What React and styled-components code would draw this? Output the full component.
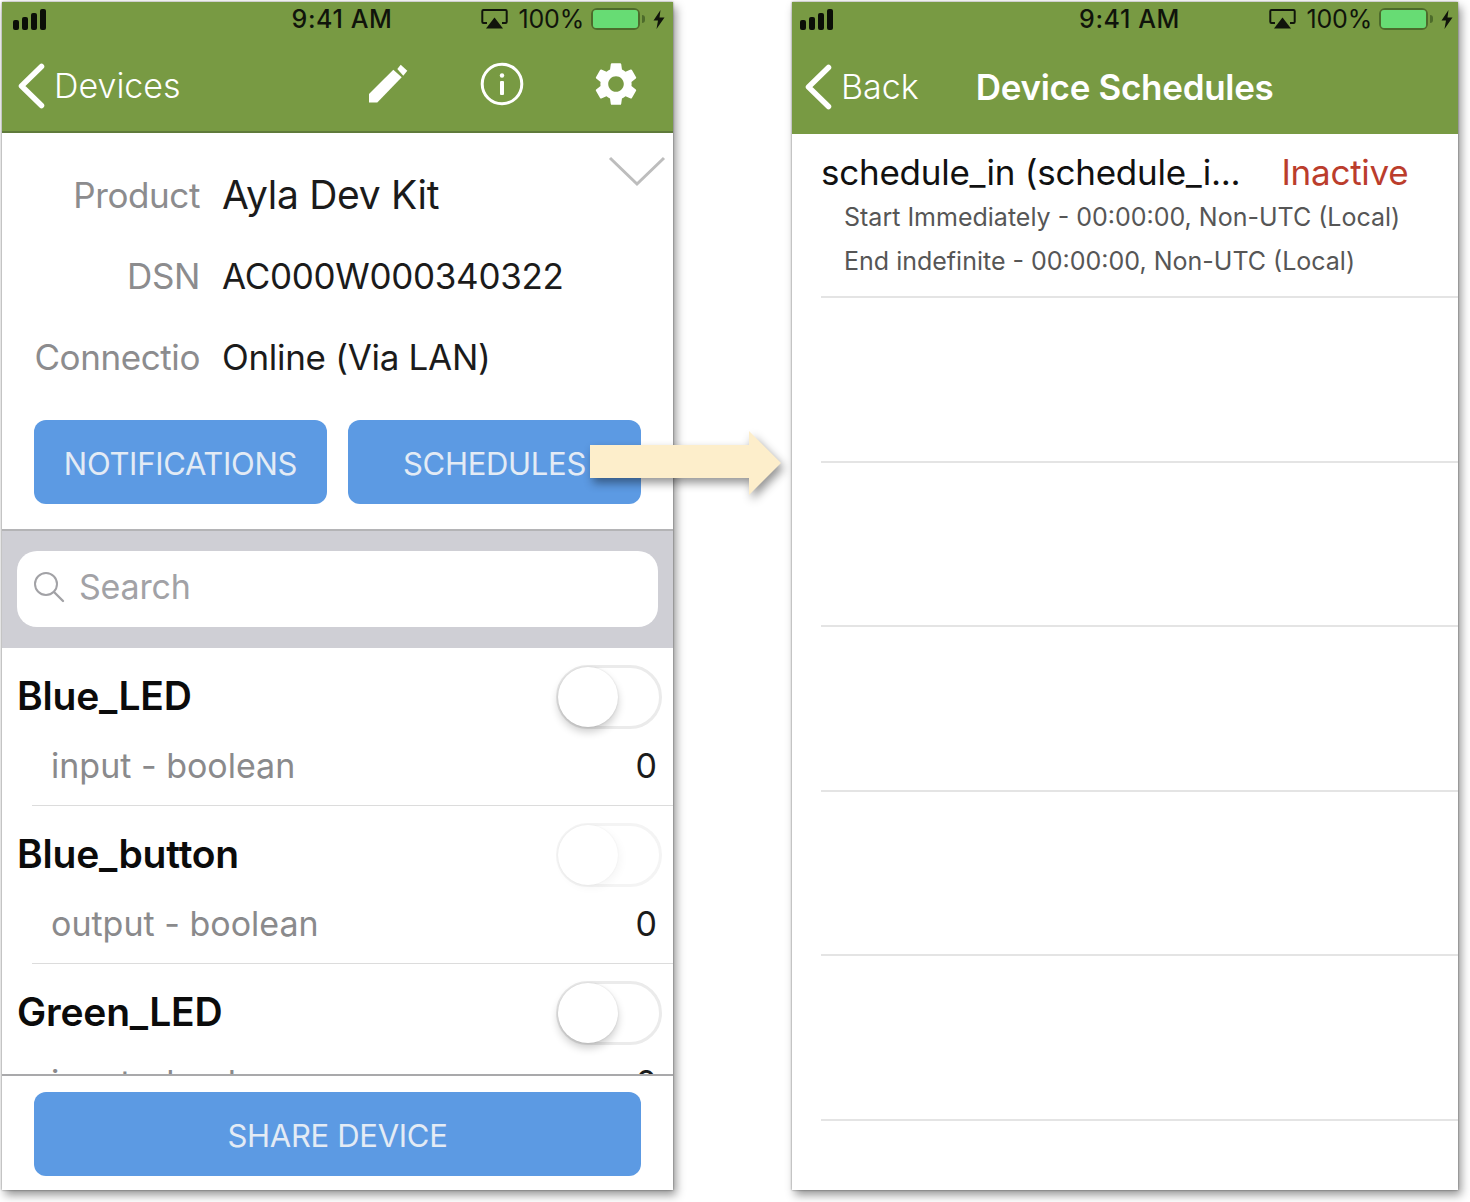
import React from 'react'
import styled, { createGlobalStyle } from 'styled-components'
import { MdSettings } from 'react-icons/md'

const Global = createGlobalStyle`
html,body{margin:0;padding:0;background:#fff;}
body{font-family:"Inter","Noto Sans","Liberation Sans",sans-serif;-webkit-font-smoothing:antialiased;}
`
const Stage = styled.div`
position:relative;
width:1470px;
height:1202px;
padding:2px 0 0 2px;
box-sizing:border-box;
display:flex;
gap:119px;
overflow:hidden;
`
const Phone = styled.div`
width:${p => p.$w}px;
height:1188px;
display:flex;
flex-direction:column;
position:relative;
background:#fff;
overflow:hidden;
box-shadow:0 0 2px rgba(0,0,0,.45);
`
const ShadowWrap = styled.div`
height:1188px;
box-shadow:3px 5px 9px rgba(0,0,0,.42);
`
const Nav = styled.div`
flex:none;
height:${p => p.$h}px;
box-sizing:border-box;
background:#789a43;
display:flex;
flex-direction:column;
border-bottom:${p => p.$line ? '2px solid #5f7a3b' : 'none'};
`
const Status = styled.div`
height:34px;
flex:none;
position:relative;
display:flex;
align-items:center;
justify-content:space-between;
padding:0 ${p => p.$pr}px 0 ${p => p.$pl}px;
`
const Signal = styled.div`
display:flex;
align-items:flex-end;
gap:3px;
height:21px;
margin-top:1px;
`
const Bar = styled.i`
display:block;
width:6px;
height:${p => p.$h}px;
background:#0b0f07;
border-radius:2px;
`
const Clock = styled.div`
position:absolute;
left:9px;
right:0;
top:3px;
text-align:center;
font-size:25px;
line-height:29px;
font-weight:500;
color:#10140b;
letter-spacing:.6px;
`
const StatusRight = styled.div`
display:flex;
align-items:center;
`
const Percent = styled.span`
font-size:25px;
line-height:30px;
color:#10140b;
font-weight:400;
margin:0 7px 0 11px;
letter-spacing:-.2px;
`
const Battery = styled.div`
width:49px;
height:22px;
box-sizing:border-box;
border:2px solid #4d6b2b;
border-radius:6px;
display:flex;
`
const BatteryFill = styled.div`
flex:1;
background:#67dc74;
border-radius:3px;
`
const Nub = styled.i`
display:block;
width:3px;
height:8px;
background:#4d6b2b;
border-radius:0 3px 3px 0;
margin:0 8px 0 2px;
`
const NavBar = styled.div`
flex:1;
display:flex;
align-items:center;
padding:4px ${p => p.$pr || 0}px 0 ${p => p.$pl}px;
`
const BackText = styled.span`
font-size:34px;
line-height:40px;
color:#fff;
font-weight:300;
margin-left:9px;
`
const NavTitle = styled.span`
font-size:35px;
line-height:40px;
color:#fff;
font-weight:600;
margin-left:57px;
letter-spacing:-.3px;
`
const NavIcons = styled.div`
margin-left:auto;
margin-bottom:3px;
display:flex;
align-items:center;
gap:72px;
`
const Gear = styled(MdSettings)`
margin-left:-6px;
`
const Details = styled.div`
flex:none;
height:398px;
box-sizing:border-box;
padding:21px 32px 0;
border-bottom:2px solid #b4b4b6;
position:relative;
`
const Chevron = styled.svg`
position:absolute;
right:7px;
top:23px;
`
const DetailRow = styled.div`
height:81px;
display:grid;
grid-template-columns:166px 1fr;
column-gap:22px;
align-items:center;
`
const Label = styled.div`
text-align:right;
font-size:35px;
color:#8c8c8e;
font-weight:400;
white-space:nowrap;
direction:rtl;
letter-spacing:-.4px;
`
const Value = styled.div`
font-size:${p => p.$big ? 39 : 35}px;
color:#1b1b1b;
font-weight:400;
white-space:nowrap;
letter-spacing:-.3px;
`
const Buttons = styled.div`
display:grid;
grid-template-columns:293px 293px;
gap:21px;
margin-top:23px;
`
const Blue = styled.div`
height:84px;
background:#5c9ae3;
border-radius:12px;
display:flex;
align-items:center;
justify-content:center;
color:#e3ebf5;
font-size:31px;
font-weight:400;
letter-spacing:-.3px;
box-sizing:border-box;
padding-top:2px;
`
const SearchBand = styled.div`
flex:none;
height:117px;
box-sizing:border-box;
background:#cfcfd5;
padding:20px 15px;
`
const SearchField = styled.div`
height:76px;
background:#fff;
border-radius:20px;
display:flex;
align-items:center;
padding:0 0 5px 16px;
box-sizing:border-box;
gap:14px;
color:#a2a2a6;
font-size:34px;
letter-spacing:-.2px;
`
const List = styled.div`
flex:1;
min-height:0;
overflow:hidden;
`
const PropRow = styled.div`
height:158px;
box-sizing:border-box;
padding-top:17px;
`
const PropHead = styled.div`
height:63px;
display:flex;
align-items:center;
justify-content:space-between;
padding:0 11px 0 15px;
`
const PropName = styled.div`
font-size:39px;
font-weight:600;
color:#0b0b0b;
letter-spacing:-.2px;
margin-top:-2px;
`
const Toggle = styled.div`
width:106px;
height:64px;
box-sizing:border-box;
border:3px solid ${p => p.$faint ? '#f4f4f4' : '#ebebeb'};
border-radius:32px;
position:relative;
`
const Thumb = styled.div`
position:absolute;
left:-1px;
top:-1px;
width:60px;
height:60px;
border-radius:50%;
background:#fff;
box-shadow:${p => p.$faint
    ? '0 0 2px rgba(0,0,0,.06), 3px 3px 8px rgba(0,0,0,.04)'
    : '0 0 2px rgba(0,0,0,.12), 0 5px 9px rgba(0,0,0,.2)'};
`
const PropSub = styled.div`
margin-left:30px;
height:78px;
box-sizing:border-box;
padding:0 16px 2px 19px;
display:flex;
align-items:center;
justify-content:space-between;
border-bottom:${p => p.$last ? 'none' : '1px solid #dcdcdc'};
font-size:34px;
color:#8a8a8c;
`
const PropValue = styled.span`
color:#1b1b1b;
`
const Footer = styled.div`
flex:none;
height:116px;
box-sizing:border-box;
border-top:2px solid #a9a9ab;
padding:16px 32px 0;
`
const ScheduleList = styled.div`
flex:1;
min-height:0;
`
const ScheduleRow = styled.div`
height:164.5px;
margin-left:29px;
box-sizing:border-box;
border-bottom:2px solid #e4e4e4;
`
const FirstRow = styled(ScheduleRow)`
height:164px;
padding:14px 0 0;
`
const ScheduleHead = styled.div`
display:flex;
height:48px;
margin-bottom:-1px;
align-items:center;
font-size:35px;
color:#111;
letter-spacing:-.25px;
`
const Inactive = styled.span`
color:#bb3d2c;
margin-left:41px;
`
const ScheduleLine = styled.div`
font-size:25px;
line-height:44px;
color:#565656;
padding-left:23px;
white-space:nowrap;
`
const Arrow = styled.svg`
position:absolute;
left:580px;
top:422px;
filter:drop-shadow(3px 5px 5px rgba(0,0,0,.42));
`

const StatusBar = ({ pl, pr }) => (
  <Status $pl={pl} $pr={pr}>
    <Signal>
      <Bar $h={10} /><Bar $h={13} /><Bar $h={17} /><Bar $h={21} />
    </Signal>
    <Clock>9:41 AM</Clock>
    <StatusRight>
      <svg width="27" height="20" viewBox="0 0 27 20">
        <path d="M6 14H2.5a1.2 1.2 0 0 1-1.2-1.2V2.2A1.2 1.2 0 0 1 2.5 1h22a1.2 1.2 0 0 1 1.2 1.2v10.6a1.2 1.2 0 0 1-1.2 1.2H21" fill="none" stroke="#10140b" strokeWidth="2" />
        <path d="M13.5 8.5L22 19.5H5z" fill="#10140b" />
      </svg>
      <Percent>100%</Percent>
      <Battery><BatteryFill /></Battery>
      <Nub />
      <svg width="12" height="19" viewBox="0 0 12 19">
        <path d="M7.5 0L0.5 10.5H5L3.5 19L11.5 7.5H6.5z" fill="#10140b" />
      </svg>
    </StatusRight>
  </Status>
)

const BackChevron = () => (
  <svg width="28" height="46" viewBox="0 0 28 46">
    <path d="M24.5 3.5L4.5 23L24.5 42.5" fill="none" stroke="#fff" strokeWidth="5.5" strokeLinecap="round" strokeLinejoin="round" />
  </svg>
)

const props = [
  { name: 'Blue_LED', kind: 'input - boolean' },
  { name: 'Blue_button', kind: 'output - boolean', faint: true },
  { name: 'Green_LED', kind: 'input - boolean', last: true },
]

const DevicePhone = () => (
  <ShadowWrap>
    <Phone $w={671}>
      <Nav $h={131} $line>
        <StatusBar pl={11} pr={8} />
        <NavBar $pl={15} $pr={31}>
          <BackChevron />
          <BackText>Devices</BackText>
          <NavIcons>
            <svg width="40" height="40" viewBox="0 0 40 40">
              <path d="M1 30v8.4h8.3L33.7 13.3 25.3 5.7z" fill="#fff" />
              <path d="M29.3 5l3.4-4.3 6.6 6-4 5z" fill="#fff" />
            </svg>
            <svg width="44" height="44" viewBox="0 0 44 44">
              <circle cx="22" cy="22" r="19.8" fill="none" stroke="#fff" strokeWidth="3" />
              <circle cx="22" cy="13.5" r="2.2" fill="#fff" />
              <rect x="20" y="19" width="4" height="14" rx="1" fill="#fff" />
            </svg>
            <Gear size={52} color="#fff" />
          </NavIcons>
        </NavBar>
      </Nav>
      <Details>
        <Chevron width="58" height="31" viewBox="0 0 58 31">
          <path d="M2 2L29 28L56 2" fill="none" stroke="#bdbdbd" strokeWidth="3" />
        </Chevron>
        <DetailRow><Label>Product</Label><Value $big>Ayla Dev Kit</Value></DetailRow>
        <DetailRow><Label>DSN</Label><Value>AC000W000340322</Value></DetailRow>
        <DetailRow><Label>Connectio</Label><Value>Online (Via LAN)</Value></DetailRow>
        <Buttons>
          <Blue>NOTIFICATIONS</Blue>
          <Blue>SCHEDULES</Blue>
        </Buttons>
      </Details>
      <SearchBand>
        <SearchField>
          <svg width="32" height="32" viewBox="0 0 32 32">
            <circle cx="13" cy="13" r="11" fill="none" stroke="#a2a2a6" strokeWidth="2" />
            <path d="M21 21L30 30" stroke="#a2a2a6" strokeWidth="2.4" strokeLinecap="round" />
          </svg>
          Search
        </SearchField>
      </SearchBand>
      <List>
        {props.map(item => (
          <PropRow key={item.name}>
            <PropHead>
              <PropName>{item.name}</PropName>
              <Toggle $faint={item.faint}><Thumb $faint={item.faint} /></Toggle>
            </PropHead>
            <PropSub $last={item.last}>
              <span>{item.kind}</span>
              <PropValue>0</PropValue>
            </PropSub>
          </PropRow>
        ))}
      </List>
      <Footer>
        <Blue>SHARE DEVICE</Blue>
      </Footer>
    </Phone>
  </ShadowWrap>
)

const SchedulePhone = () => (
  <ShadowWrap>
    <Phone $w={666}>
      <Nav $h={132}>
        <StatusBar pl={8} pr={5} />
        <NavBar $pl={12}>
          <BackChevron />
          <BackText>Back</BackText>
          <NavTitle>Device Schedules</NavTitle>
        </NavBar>
      </Nav>
      <ScheduleList>
        <FirstRow>
          <ScheduleHead>
            <span>schedule_in (schedule_i...</span>
            <Inactive>Inactive</Inactive>
          </ScheduleHead>
          <ScheduleLine>Start Immediately - 00:00:00, Non-UTC (Local)</ScheduleLine>
          <ScheduleLine>End indefinite - 00:00:00, Non-UTC (Local)</ScheduleLine>
        </FirstRow>
        <ScheduleRow />
        <ScheduleRow />
        <ScheduleRow />
        <ScheduleRow />
        <ScheduleRow />
      </ScheduleList>
    </Phone>
  </ShadowWrap>
)

export default function App() {
  return (
    <Stage>
      <Global />
      <DevicePhone />
      <SchedulePhone />
      <Arrow width="210" height="84" viewBox="0 0 210 84">
        <path d="M10 23H169V9L201 41L169 73V56H10z" fill="#fdeecb" />
      </Arrow>
    </Stage>
  )
}
